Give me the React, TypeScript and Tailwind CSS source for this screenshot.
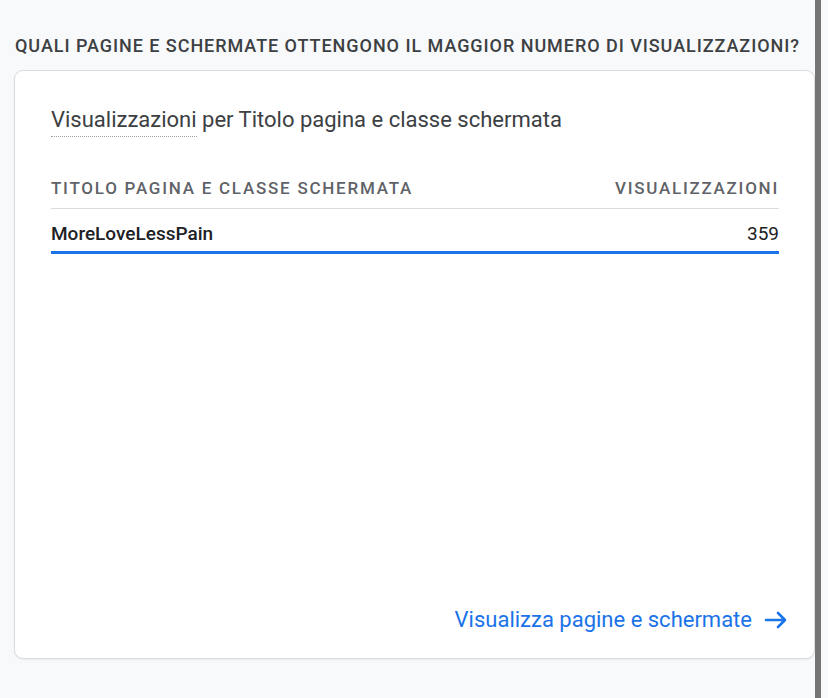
import React from "react";

const font = { fontFamily: "Roboto, 'Noto Sans', sans-serif" };

const App = () => {
  return (
    <div className="flex h-[698px] w-[828px] bg-[#f8f9fa] overflow-hidden" style={font}>
      <div className="flex flex-col flex-1 pl-[14px]">
        <h2 className="mt-[34px] h-[24px] pl-[1px] text-[18px] leading-[24px] font-medium tracking-[0.95px] text-[#3c4043] whitespace-nowrap">
          QUALI PAGINE E SCHERMATE OTTENGONO IL MAGGIOR NUMERO DI VISUALIZZAZIONI?
        </h2>
        <div className="mt-[12px] flex flex-col h-[589px] bg-white border border-[#dadce0] rounded-[9px] shadow-[0_1px_2px_rgba(60,64,67,0.08)]">
          <div className="pl-[36px] pr-[35px] pt-[35px]">
            <div className="text-[22px] leading-[28px] text-[#3c4043] whitespace-nowrap">
              <span className="pb-[4px] border-b border-dotted border-[#9aa0a6]">Visualizzazioni</span> per Titolo pagina e classe schermata
            </div>
            <div className="mt-[35px] flex justify-between items-center h-[40px] border-b border-[#dadce0] text-[17px] font-medium tracking-[1.75px] text-[#5f6368]">
              <span>TITOLO PAGINA E CLASSE SCHERMATA</span>
              <span>VISUALIZZAZIONI</span>
            </div>
            <div className="flex justify-between items-center h-[45px] pt-[8px] border-b-[3px] border-[#1a73e8] text-[19px] text-[#202124]">
              <span className="font-medium">MoreLoveLessPain</span>
              <span>359</span>
            </div>
          </div>
          <div className="mt-auto mb-[24px] flex justify-end pr-[26px]">
            <a className="flex items-center gap-[12px] text-[22px] leading-[28px] text-[#1a73e8]">
              Visualizza pagine e schermate
              <svg width="24" height="24" viewBox="0 0 24 24" fill="none">
                <path d="M2 12h19M14 5l7 7-7 7" stroke="#1a73e8" strokeWidth="2.6" strokeLinecap="round" strokeLinejoin="round" />
              </svg>
            </a>
          </div>
        </div>
      </div>
      <div className="w-[6px] h-full bg-[#757575]" />
      <div className="w-[7px] h-full bg-[#f8f9fa]" />
    </div>
  );
};

export default App;
